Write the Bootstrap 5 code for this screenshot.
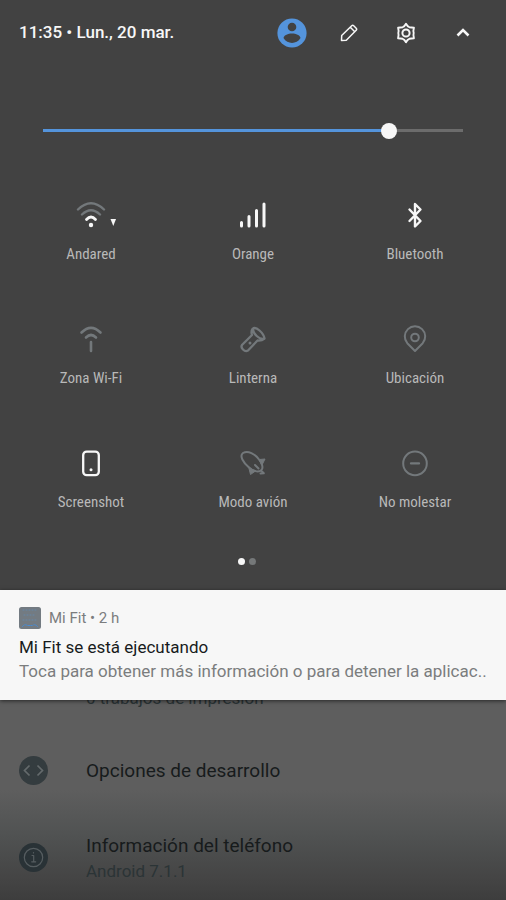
<!DOCTYPE html>
<html lang="es">
<head>
<meta charset="utf-8">
<meta name="viewport" content="width=device-width, initial-scale=1">
<title>Ajustes rápidos</title>
<link href="https://cdn.jsdelivr.net/npm/bootstrap@5.3.0/dist/css/bootstrap.min.css" rel="stylesheet">
<style>
  body { font-family: Roboto, "Liberation Sans", sans-serif; background: #3d3d3d; color: #171b1c; }
  svg { display: block; fill: none; stroke: currentColor; stroke-width: 2; stroke-linecap: round; stroke-linejoin: round; }
  .solid { fill: currentColor; stroke: none; }
  .shade { background: #424242; color: #f7f7f7; padding-bottom: 25px; }
  .topbar { height: 66px; padding-left: 19px; padding-right: 15px; }
  .clock { font-size: 17px; line-height: 24px; font-weight: 500; margin-bottom: 2px; }
  .tool { width: 57px; height: 48px; color: inherit; }
  .brightness { padding: 52px 43px 0; }
  .slider { appearance: none; display: block; width: 100%; height: 24px; margin: 0; background: transparent; }
  .slider::-webkit-slider-runnable-track { height: 3px; background: linear-gradient(to right, #5494dc 83%, #6c6c6c 83%); }
  .slider::-webkit-slider-thumb { appearance: none; width: 16px; height: 16px; margin-top: -6px; border-radius: 50%; background: #f7f7f7; }
  .tiles { padding: 56px 10px 0; }
  .tile { height: 124px; color: #73787b; }
  .tile.active { color: #f7f7f7; }
  .tile-name { font-family: "Roboto Condensed", "Liberation Sans Narrow", Roboto, sans-serif; font-size: 15px; line-height: 20px; color: #b9b9b9; margin-top: 12px; }
  .pages { margin-top: -12px; gap: 4px; padding-right: 12px; }
  .dot { width: 7px; height: 7px; border-radius: 50%; background: #f7f7f7; }
  .dot.off { background: #757879; }
  .notice { background: #f7f7f7; padding: 16px 19px 17px; box-shadow: 0 1px 4px rgba(0,0,0,.6); position: relative; color: inherit; }
  .notice-app { font-size: 15px; line-height: 24px; color: #7b7d7e; }
  .notice-title { font-size: 17px; line-height: 24px; margin-top: 5px; }
  .notice-text { font-size: 17px; line-height: 24px; color: #7b7d7e; }
  .settings { min-height: 200px; background: linear-gradient(#5e5e5e 45%, #505252 68%, #444 90%, #3d3d3d); }
  .printing { font-size: 17px; line-height: 24px; height: 10px; color: #2b3436; padding-left: 86px; }
  .option { padding-left: 19px; color: inherit; }
  .option svg { flex: none; margin-right: 38px; }
  .option-name { font-size: 19px; line-height: 28px; }
  .option-note { font-size: 17px; line-height: 22px; color: #2b3436; }
  .dev { padding-top: 46px; }
  .about { padding-top: 47px; }
</style>
<script src="https://cdn.jsdelivr.net/npm/bootstrap@5.3.0/dist/js/bootstrap.bundle.min.js"></script>
</head>
<body>
<main>
  <section class="shade">
    <header class="topbar d-flex align-items-center justify-content-between">
      <div class="clock">11:35 • Lun., 20 mar.</div>
      <div class="d-flex">
        <button class="tool btn p-0 border-0 d-flex align-items-center justify-content-center" aria-label="Usuario">
          <svg width="30" height="30" viewBox="0 0 30 30"><circle cx="15" cy="15" r="14.6" fill="#5494dc" stroke="none"/><circle cx="15" cy="9" r="4.3" fill="#424242" stroke="none"/><path d="M6.500 20c1-6 16-6 17 0-4 6.500-13 6.500-17 0z" fill="#424242" stroke="none"/></svg>
        </button>
        <button class="tool btn p-0 border-0 d-flex align-items-center justify-content-center" aria-label="Editar">
          <svg width="20" height="20" viewBox="0 0 20 20"><path d="M2.500 17.500l.2-5L12.700 2.700q1-1 2 0l2.500 2.500q1 1 0 2L7.300 17.200zM11.300 4.200l4.500 4.500" style="stroke-width:1.500"/></svg>
        </button>
        <button class="tool btn p-0 border-0 d-flex align-items-center justify-content-center" aria-label="Ajustes">
          <svg width="22" height="22" viewBox="0 0 22 22"><path d="M11 1.800Q12.500 4.600 14.300 5.200L18.900 5.700Q18 9 18.700 11 18 13 18.900 16.300L14.300 16.800Q12.500 17.400 11 20.200 9.500 17.400 7.700 16.800L3.100 16.300Q4 13 3.300 11 4 9 3.100 5.700L7.700 5.200Q9.500 4.600 11 1.800z" style="stroke-width:1.900"/><circle cx="11" cy="11" r="3.600"/></svg>
        </button>
        <button class="tool btn p-0 border-0 d-flex align-items-center justify-content-center" aria-label="Contraer">
          <svg width="16" height="16" viewBox="0 0 16 16"><path d="M2.500 10.500L8 5l5.500 5.500" style="stroke-width:2.600;stroke-linecap:butt;stroke-linejoin:miter"/></svg>
        </button>
      </div>
    </header>

    <div class="brightness">
      <input class="slider" type="range" min="0" max="404" value="338" aria-label="Brillo">
    </div>

    <div class="tiles row row-cols-3 g-0">
      <button class="tile active col btn p-0 border-0 d-flex flex-column align-items-center">
        <svg width="60" height="34" viewBox="0 0 60 34"><g style="stroke-width:2.400"><path d="M17 11.500q13-12.500 26 0M21 16.500q9-8.500 18 0" stroke="#73787b"/><path d="M25.500 21.500q4.500-5 9 0" style="stroke-width:2.800"/></g><circle class="solid" cx="30" cy="27" r="2.200"/><path class="solid" d="M49.500 21h5.500l-2.700 7z"/></svg>
        <span class="tile-name">Andared</span>
      </button>
      <button class="tile active col btn p-0 border-0 d-flex flex-column align-items-center">
        <svg width="34" height="34" viewBox="0 0 34 34"><path d="M5.500 24.500v3.500M13 18.500v9.500M20.500 12.500v15.500M28 6v22" style="stroke-width:3"/></svg>
        <span class="tile-name">Orange</span>
      </button>
      <button class="tile active col btn p-0 border-0 d-flex flex-column align-items-center">
        <svg width="34" height="34" viewBox="0 0 34 34"><path d="M11.500 11.500L22.500 23 17 28.500V6L22.500 11.500 11.500 23" style="stroke-width:2.400"/></svg>
        <span class="tile-name">Bluetooth</span>
      </button>
      <button class="tile col btn p-0 border-0 d-flex flex-column align-items-center">
        <svg width="34" height="34" viewBox="0 0 34 34"><path d="M7.500 10.500q9.500-9.500 19 0M12 15.500q5-5 10 0M17 20v9" style="stroke-width:2.600"/></svg>
        <span class="tile-name">Zona Wi-Fi</span>
      </button>
      <button class="tile col btn p-0 border-0 d-flex flex-column align-items-center">
        <svg width="34" height="34" viewBox="0 0 34 34"><path d="M16.500 7q2.500-2.500 7 1.500t5 8q-3 2.500-7 2L12 28.500q-2.500 1.500-5-1t-.8-4.700L16 13q-1.200-3.500.5-6zM17 7q0 3.500 3.700 7t7.500 2.800" style="stroke-width:2.300"/><circle class="solid" cx="14" cy="21" r="1.500"/></svg>
        <span class="tile-name">Linterna</span>
      </button>
      <button class="tile col btn p-0 border-0 d-flex flex-column align-items-center">
        <svg width="34" height="34" viewBox="0 0 34 34"><path d="M17 29L9.300 21.200a10.200 10.200 0 1 1 15.400 0z"/><circle cx="17" cy="15.500" r="3.800"/></svg>
        <span class="tile-name">Ubicación</span>
      </button>
      <button class="tile active col btn p-0 border-0 d-flex flex-column align-items-center">
        <svg width="34" height="34" viewBox="0 0 34 34"><rect x="9.200" y="5.600" width="15.600" height="23.600" rx="3.500" style="stroke-width:2.300"/><circle class="solid" cx="17" cy="23.800" r="1.500"/></svg>
        <span class="tile-name">Screenshot</span>
      </button>
      <button class="tile col btn p-0 border-0 d-flex flex-column align-items-center">
        <svg width="34" height="34" viewBox="0 0 34 34"><path d="M7 7c5-3 12 1 16 6.500 3 4 4.500 8 2.500 10.500-3 3-9 1-13-3C7.500 16.500 3 10 7 7zM19 19l3.500 3.500M26 25.500l1.800 1.800-3.300.2"/><path d="M23.500 13.500l5.500-.5-3 6zM13 22.500l1.500 6 5-3.500z" fill="currentColor" style="stroke-width:1"/></svg>
        <span class="tile-name">Modo avión</span>
      </button>
      <button class="tile col btn p-0 border-0 d-flex flex-column align-items-center">
        <svg width="34" height="34" viewBox="0 0 34 34"><circle cx="17" cy="17.400" r="11.800"/><path d="M13 17.400h8" style="stroke-width:2.300"/></svg>
        <span class="tile-name">No molestar</span>
      </button>
    </div>

    <div class="pages d-flex justify-content-center" aria-hidden="true">
      <span class="dot"></span><span class="dot off"></span>
    </div>
  </section>

  <article class="notice">
    <div class="notice-app d-flex align-items-center gap-2">
      <svg width="22" height="22" viewBox="0 0 22 22"><rect width="22" height="22" rx="2.500" fill="#737b82" stroke="none"/><path d="M4 3h14M5 8h12M4 13h14" stroke="#6788a8" style="stroke-width:1;stroke-dasharray:1 2"/><path d="M3.500 19.500q2.500-3 5-1h5q2.500-2 5 1" stroke="#4a8bd0" style="stroke-width:1;stroke-dasharray:2 1"/></svg>
      <span>Mi Fit • 2 h</span>
    </div>
    <div class="notice-title">Mi Fit se está ejecutando</div>
    <div class="notice-text text-nowrap">Toca para obtener más información o para detener la aplicac..</div>
  </article>

  <section class="settings">
    <div class="printing d-flex align-items-end">0 trabajos de impresión</div>
    <a href="#" class="option dev d-flex align-items-center text-decoration-none">
      <svg width="29" height="29" viewBox="0 0 29 29"><circle cx="14.500" cy="14.500" r="14.500" fill="#343c3f" stroke="none"/><path d="M10.500 9.500l-5 5 5 5M18.500 9.500l5 5-5 5" stroke="#646a6c" style="stroke-width:1.700;stroke-linecap:butt;stroke-linejoin:miter"/></svg>
      <span class="option-name">Opciones de desarrollo</span>
    </a>
    <a href="#" class="option about d-flex align-items-center text-decoration-none">
      <svg width="29" height="29" viewBox="0 0 29 29"><circle cx="14.500" cy="14.500" r="14.500" fill="#293236" stroke="none"/><g stroke="#565d60" style="stroke-width:1.200"><circle cx="14.500" cy="14.500" r="9.200"/><path d="M13 12.500h1.700v6M12.700 18.800h4M14.500 9.500v.4"/></g></svg>
      <span class="d-flex flex-column">
        <span class="option-name">Información del teléfono</span>
        <span class="option-note">Android 7.1.1</span>
      </span>
    </a>
  </section>
</main>
</body>
</html>
